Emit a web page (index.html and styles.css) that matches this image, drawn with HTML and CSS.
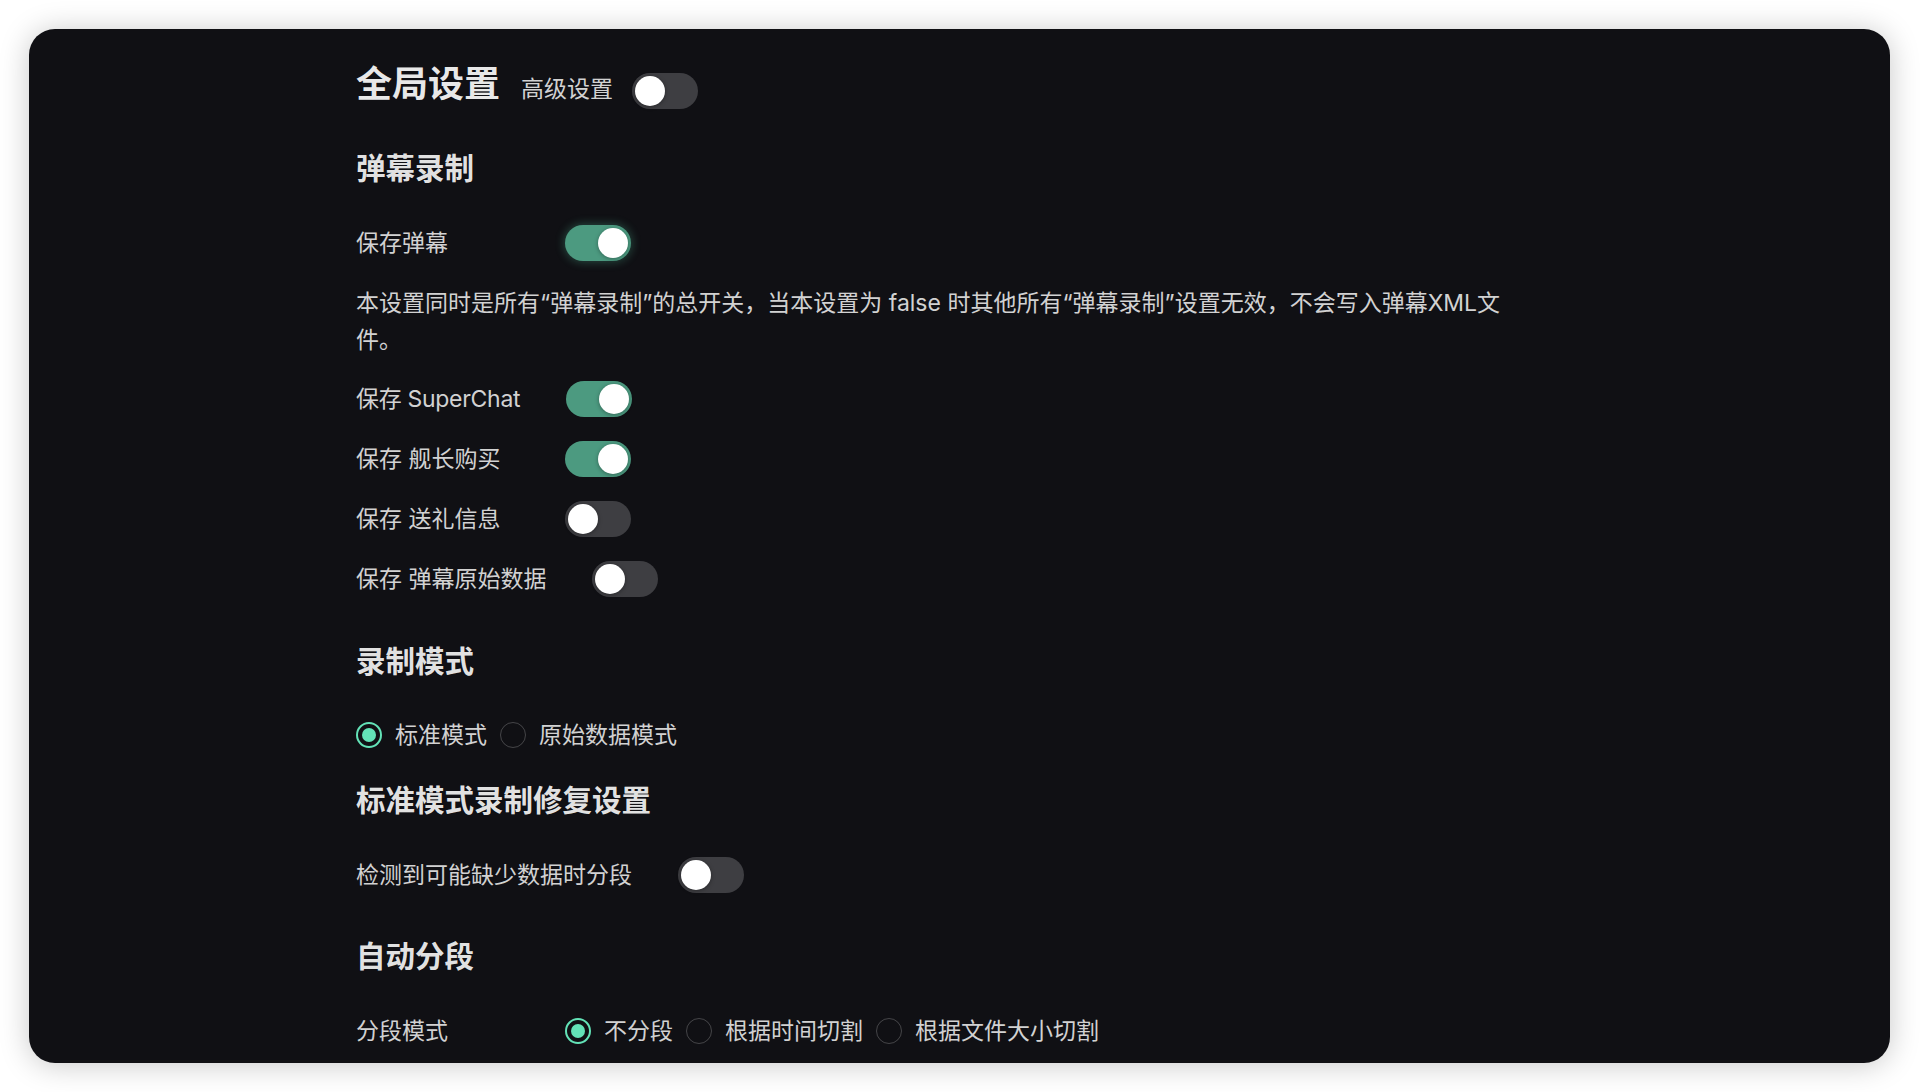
FILE: index.html
```html
<!DOCTYPE html>
<html lang="zh-CN">
<head>
<meta charset="utf-8">
<title>全局设置</title>
<link rel="stylesheet" href="styles.css">
</head>
<body>
<div class="card">
  <div class="content">
    <div class="header">
      <h2 class="title">全局设置</h2>
      <div class="adv">
        <span class="adv-label">高级设置</span>
        <span class="switch adv-switch"><span class="knob"></span></span>
      </div>
    </div>

    <h3 class="section sec-danmaku">弹幕录制</h3>
    <div class="row row-first">
      <span class="label">保存弹幕</span>
      <span class="switch on focus"><span class="knob"></span></span>
    </div>
    <p class="desc">本设置同时是所有“弹幕录制”的总开关，当本设置为 false 时其他所有“弹幕录制”设置无效，不会写入弹幕XML文件。</p>

    <div class="rows">
      <div class="row">
        <span class="label"><span class="narrow">保存 SuperChat</span></span>
        <span class="switch on"><span class="knob"></span></span>
      </div>
      <div class="row">
        <span class="label">保存 舰长购买</span>
        <span class="switch on"><span class="knob"></span></span>
      </div>
      <div class="row">
        <span class="label">保存 送礼信息</span>
        <span class="switch"><span class="knob"></span></span>
      </div>
      <div class="row">
        <span class="label">保存 弹幕原始数据</span>
        <span class="switch"><span class="knob"></span></span>
      </div>
    </div>

    <h3 class="section sec-mode">录制模式</h3>
    <div class="radios radios-mode">
      <span class="radio checked"><span class="dot"></span></span><span class="radio-text">标准模式</span>
      <span class="radio"><span class="dot"></span></span><span class="radio-text">原始数据模式</span>
    </div>

    <h3 class="section sec-fix">标准模式录制修复设置</h3>
    <div class="row row-fix">
      <span class="label">检测到可能缺少数据时分段</span>
      <span class="switch"><span class="knob"></span></span>
    </div>

    <h3 class="section sec-split">自动分段</h3>
    <div class="row row-split">
      <span class="label">分段模式</span>
      <div class="radios">
        <span class="radio checked"><span class="dot"></span></span><span class="radio-text">不分段</span>
        <span class="radio"><span class="dot"></span></span><span class="radio-text">根据时间切割</span>
        <span class="radio"><span class="dot"></span></span><span class="radio-text">根据文件大小切割</span>
      </div>
    </div>
  </div>
</div>
</body>
</html>
```

FILE: styles.css
```css
html, body {
  margin: 0;
  padding: 0;
  background: #ffffff;
}

body {
  width: 1920px;
  height: 1092px;
  overflow: hidden;
  font-family: "Inter", "Noto Sans CJK SC", sans-serif;
  font-size: 23px;
  color: rgba(255, 255, 255, 0.82);
}

.card {
  margin: 29px 30px 0 29px;
  height: 1034px;
  background: #101014;
  border-radius: 26px;
  box-shadow: 0 2px 30px rgba(0, 0, 0, 0.22);
  overflow: hidden;
  box-sizing: border-box;
  padding: 27px 0 0 327px;
}

.content {
  width: 1145px;
}

.header {
  display: flex;
  align-items: baseline;
  gap: 21px;
  height: 56px;
}

.title {
  margin: 0;
  font-size: 36px;
  line-height: 56px;
  font-weight: 700;
  color: rgba(255, 255, 255, 0.92);
}

.adv {
  display: flex;
  align-items: center;
  gap: 19px;
}

.adv-label {
  line-height: 36px;
}

.adv-switch {
  margin-top: 4px;
}

.section {
  margin: 0;
  font-size: 29.5px;
  line-height: 40px;
  font-weight: 700;
  color: rgba(255, 255, 255, 0.9);
}

.sec-danmaku { margin-top: 36px; }
.sec-mode { margin-top: 44px; }
.sec-fix { margin-top: 27px; }
.sec-split { margin-top: 43px; }

.row {
  display: flex;
  align-items: center;
  height: 36px;
}

.row-first { margin-top: 37px; }
.row-fix { margin-top: 37px; }
.row-split { margin-top: 37px; }

.label {
  min-width: 163px;
  padding-right: 46px;
  line-height: 36px;
  white-space: nowrap;
}

.narrow {
  letter-spacing: -0.3px;
}

.desc {
  margin: 24px 0 0 0;
  line-height: 37px;
}

.rows {
  margin-top: 22px;
  display: flex;
  flex-direction: column;
  gap: 24px;
}

.switch {
  position: relative;
  display: inline-block;
  flex: none;
  width: 66px;
  height: 36px;
  border-radius: 18px;
  background: #3e3e42;
}

.switch.on {
  background: #4c9a80;
}

.switch.focus {
  box-shadow: 0 0 10px 1px rgba(99, 226, 183, 0.28);
}

.knob {
  position: absolute;
  top: 3px;
  left: 3px;
  width: 30px;
  height: 30px;
  border-radius: 50%;
  background: #ffffff;
  box-shadow: 0 1px 4px rgba(0, 0, 0, 0.35);
}

.switch.on .knob {
  left: 33px;
}

.radios {
  display: flex;
  align-items: center;
  height: 36px;
}

.radios-mode { margin-top: 36px; }

.radio {
  position: relative;
  flex: none;
  width: 26px;
  height: 26px;
  border-radius: 50%;
  box-sizing: border-box;
  border: 1.6px solid rgba(255, 255, 255, 0.22);
}

.radio.checked {
  border: 2px solid #63e2b7;
}

.radio .dot {
  display: none;
}

.radio.checked .dot {
  display: block;
  position: absolute;
  top: 4px;
  left: 4px;
  width: 14px;
  height: 14px;
  border-radius: 50%;
  background: #63e2b7;
}

.radio-text {
  padding: 0 13px;
  line-height: 36px;
  white-space: nowrap;
}
```
